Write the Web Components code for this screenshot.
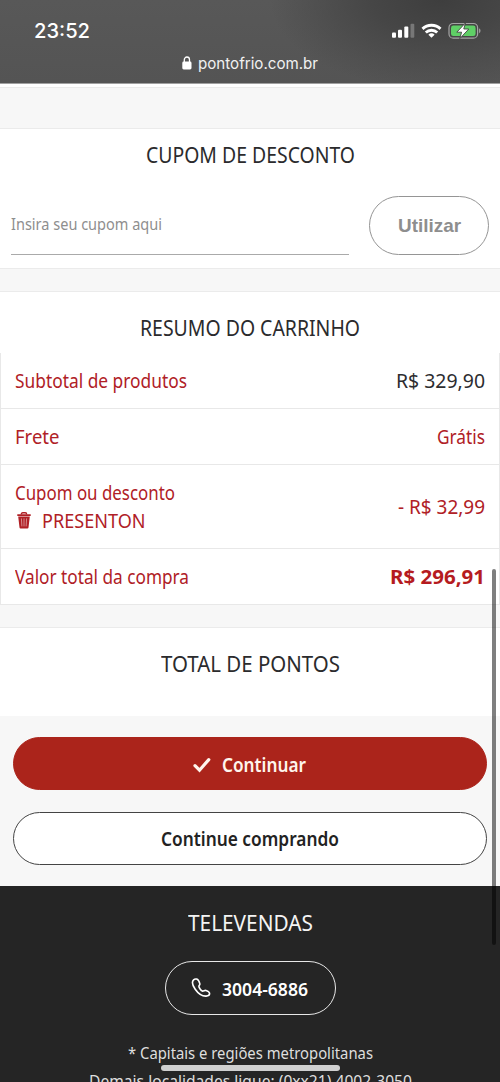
<!DOCTYPE html>
<html lang="pt-BR">
<head>
<meta charset="utf-8">
<title>Carrinho</title>
<style>
html,body{margin:0;height:1082px;overflow:hidden}
body{background:#f7f7f7;font-family:"Noto Sans","Open Sans",sans-serif;color:#2b2b2d}
</style>
</head>
<body>
<checkout-page></checkout-page>
<script>
const define = (name, html, setup) => customElements.define(name, class extends HTMLElement {
  constructor() {
    super();
    const t = document.createElement('template');
    t.innerHTML = html;
    this.attachShadow({ mode: 'open' }).append(t.content.cloneNode(true));
  }
  connectedCallback() { if (setup) setup(this, this.shadowRoot); }
});

/* One line of text, condensed to the width given in "w" and sized by "s". */
define('fit-text', `<style>
  :host{display:block;white-space:nowrap;flex:none;text-align:left}
  span{display:inline-block;transform-origin:0 50%;line-height:inherit;vertical-align:top}
</style><span></span>`, (el, root) => {
  const span = root.querySelector('span');
  const w = +el.getAttribute('w');
  span.textContent = el.getAttribute('text');
  el.style.fontSize = el.getAttribute('s') + 'px';
  el.style.width = w + 'px';
  span.style.transform = `scaleX(${w / span.getBoundingClientRect().width})`;
});

define('status-bar', `<style>
  :host{display:block;box-sizing:border-box;height:84px;color:#fff;border-bottom:1px solid #a0a0a0;
    background:radial-gradient(ellipse 170px 90px at 440px 0,#3e3e3e 0,#464646 40%,#58585800 100%),linear-gradient(#585858,#545454);
    font-family:Inter,Roboto,sans-serif}
  .top{display:flex;justify-content:space-between;align-items:center;height:28px;padding:17px 19px 0 34px;font-weight:550;line-height:28px}
  .icons{display:flex;align-items:center}
  .url{display:flex;justify-content:center;align-items:center;height:28px;padding-top:4px;gap:6px;line-height:28px;color:#f1f1f1}
  svg{display:block}
</style>
<div class="top"><fit-text text="23:52" s="20" w="56"></fit-text>
<div class="icons">
 <svg width="90" height="18" viewBox="391 22 90 18">
  <g fill="#fff"><rect x="392" y="32.4" width="4" height="5.4" rx="1"/><rect x="398" y="29.8" width="4" height="8" rx="1"/><rect x="404.3" y="26.5" width="4" height="11.3" rx="1"/></g>
  <rect x="410.5" y="23.7" width="3.8" height="14.1" rx="1" fill="#777"/>
  <g fill="none" stroke="#fff" stroke-width="2.9"><path d="M422.5 28.9a13 13 0 0 1 18 0"/><path d="M425.8 32.5a8.3 8.3 0 0 1 11.4 0"/></g>
  <path d="M431.5 37.8l-3.1-3.1a4.5 4.5 0 0 1 6.2 0z" fill="#fff"/>
  <rect x="449" y="23.5" width="28.6" height="14.6" rx="4.2" fill="none" stroke="#a4a4a4" stroke-width="1.2"/>
  <rect x="451" y="25.5" width="24.6" height="10.6" rx="2.4" fill="#5fcf66"/>
  <path d="M479 28.3v5q1.6-.6 1.6-2.5t-1.6-2.5z" fill="#999"/>
  <path d="M465.4 23l-8.600 9.200h4.800l-1.800 6.400 9-9.600h-5z" fill="#fff" stroke="#444" stroke-width=".9"/>
 </svg></div></div>
<div class="url"><svg width="10" height="14" viewBox="0 0 10 14"><rect x=".3" y="5.6" width="9.2" height="7.8" rx="1.4" fill="#fff"/><path d="M2.3 6.5V3.8a2.6 2.8 0 0 1 5.2 0v2.7" fill="none" stroke="#fff" stroke-width="1.3"/></svg>
<fit-text text="pontofrio.com.br" s="16" w="120"></fit-text></div>`);

define('page-band', `<style>
  :host{display:block;box-sizing:border-box;background:#f7f7f7;border:solid #ebebeb;border-width:1px 0}
</style>`);

define('section-title', `<style>
  :host{display:flex;justify-content:center;height:30px;line-height:30px}
</style><slot></slot>`);

define('coupon-form', `<style>
  :host{display:flex;box-sizing:border-box;height:59px;padding:0 11px;justify-content:space-between}
  .field{width:338px;height:59px;box-sizing:border-box;border-bottom:1px solid #aaa;line-height:30px;padding-top:13px;color:#8e8e8e}
  button{display:flex;justify-content:center;align-items:center;width:120px;height:59px;padding:0;margin:0;border:1.5px solid #959595;
    border-radius:30px;background:#fff;color:#8e8e8e;font:bold 18px/30px "Liberation Sans",sans-serif}
</style><div class="field"><fit-text text="Insira seu cupom aqui" s="17" w="151"></fit-text></div>
<button><fit-text text="Utilizar" s="19" w="63"></fit-text></button>`);

define('summary-row', `<style>
  :host{display:flex;justify-content:space-between;align-items:center;box-sizing:border-box;height:56px;padding:1px 14px 0 13.5px;
    border:solid #e8e8e8;border-width:0 1px 1px;line-height:28px;color:#b02026}
  :host([tall]){height:84px}
</style><div><slot name="label"></slot></div><div><slot></slot></div>`);

define('coupon-code', `<style>
  :host{display:flex;align-items:center;height:28px;padding-left:2.5px;gap:11px}
  svg{display:block;margin-top:-2px}
</style><svg width="14" height="17" viewBox="0 0 14 17"><path d="M4.3 2.4Q4.3.7 5.8.7h2.4q1.5 0 1.5 1.7" fill="none" stroke="#b02026" stroke-width="1.4"/><path d="M.3 2.2h13.4v1.7H.3zM1.2 4.6h11.6l-1.3 11q-.1 1-1.1 1H3.6q-1 0-1.1-1z" fill="#b02026"/><path d="M4.4 6.4l.5 8M7 6.4v8M9.6 6.4l-.5 8" stroke="#fff" stroke-opacity=".6" stroke-width=".8"/></svg><slot></slot>`);

define('pill-button', `<style>
  :host{display:flex;flex:none;justify-content:center;align-items:center;box-sizing:border-box;height:53px;border-radius:27px;
    line-height:30px;font-weight:600;border:1.5px solid #444;background:#fff;color:#222}
  :host([primary]){border-color:#ab241b;background:#ab241b;color:#fff5ed;gap:11px;padding:2px 1px 0 0}
  :host([dark]){border-color:#e8e8e8;background:transparent;color:#fff;gap:11px;width:171px;height:54px;padding:3px 2px 0 0}
</style><slot></slot>`);

define('line-icon', `<style>:host{display:block;flex:none}svg{display:block}:host([kind=phone]){margin-top:-4px}</style><div></div>`, (el, root) => {
  root.querySelector('div').innerHTML = el.getAttribute('kind') === 'check'
    ? '<svg width="18" height="16" viewBox="0 0 18 16"><path d="M2 8.7l4.5 4.5L15.8 2.6" fill="none" stroke="#fff5ed" stroke-width="3.2" stroke-linecap="round"/></svg>'
    : '<svg width="20" height="20" viewBox="0 0 20 20"><path d="M2.6 1.9C1 3.5 1.1 6.8 4.2 11.2c3.2 4.6 7.6 7 10.9 6.9 2 0 3.5-1.2 3.5-2.5 0-1.2-1.6-2.4-3.6-3.1-1.5-.5-2.3.9-3.6.6-1.3-.4-3.7-3.7-3.5-5 .1-.9 1.3-1 .9-2.500C8.4 4 7.300 1.600 5.600 1.100 4.500.8 3.400 1.100 2.600 1.900z" fill="none" stroke="#fff" stroke-width="1.6"/></svg>';
});

define('tele-footer', `<style>
  :host{display:flex;flex-direction:column;align-items:center;box-sizing:border-box;height:196px;overflow:hidden;background:#252525;color:#f4f4f4;padding-top:21px}
  section-title,fit-text{flex:none}
  pill-button{margin:24px 0 24px}
  .note{height:28px;line-height:28px;color:#dedede}
</style>
<section-title><fit-text text="TELEVENDAS" s="22" w="125"></fit-text></section-title>
<pill-button dark><line-icon kind="phone"></line-icon><fit-text text="3004-6886" s="17" w="86"></fit-text></pill-button>
<fit-text class="note" text="* Capitais e regiões metropolitanas" s="17" w="245"></fit-text>
<fit-text class="note" text="Demais localidades ligue: (0xx21) 4002-3050" s="17" w="323"></fit-text>`);

define('overlay-bar', `<style>
  :host{display:block;position:absolute;border-radius:4px}
  :host([scroll]){left:492px;top:569px;width:4px;height:376px;background:rgba(0,0,0,.5)}
  :host([home]){left:161px;top:1065px;width:179px;height:6px;background:#cfcfcf}
</style>`);

define('checkout-page', `<style>
  :host{display:block;position:relative;width:500px;height:1082px;overflow:hidden;background:#f7f7f7}
  .card{background:#fff;box-sizing:border-box}
  .strip{height:3px}.coupon{height:139px;padding-top:10px}.coupon coupon-form{margin-top:27px}
  .summary{height:313px;padding-top:20px}.summary section-title{margin-bottom:11px}
  .points{height:88px;padding-top:20px}
  .actions{display:flex;flex-direction:column;gap:22px;padding:21px 13px}
</style>
<status-bar></status-bar>
<div class="card strip"></div>
<page-band style="height:42px"></page-band>
<div class="card coupon"><section-title><fit-text text="CUPOM DE DESCONTO" s="22" w="209"></fit-text></section-title><coupon-form></coupon-form></div>
<page-band style="height:24px"></page-band>
<div class="card summary"><section-title><fit-text text="RESUMO DO CARRINHO" s="22" w="220"></fit-text></section-title>
<summary-row><fit-text slot="label" text="Subtotal de produtos" s="19.5" w="172"></fit-text><fit-text text="R$ 329,90" s="19.5" w="89" style="color:#2d2d30"></fit-text></summary-row>
<summary-row><fit-text slot="label" text="Frete" s="19.5" w="44.5"></fit-text><fit-text text="Grátis" s="19.5" w="48"></fit-text></summary-row>
<summary-row tall><div slot="label"><fit-text text="Cupom ou desconto" s="19.5" w="160"></fit-text><coupon-code><fit-text text="PRESENTON" s="19.5" w="103.5"></fit-text></coupon-code></div><fit-text text="- R$ 32,99" s="19.5" w="87"></fit-text></summary-row>
<summary-row><fit-text slot="label" text="Valor total da compra" s="19.5" w="174"></fit-text><fit-text text="R$ 296,91" s="19.5" w="95" style="font-weight:700;color:#b51b20"></fit-text></summary-row></div>
<page-band style="height:23px;border-top:0"></page-band>
<div class="card points"><section-title><fit-text text="TOTAL DE PONTOS" s="22" w="179"></fit-text></section-title></div>
<div class="actions">
<pill-button primary><line-icon kind="check"></line-icon><fit-text text="Continuar" s="19" w="84"></fit-text></pill-button>
<pill-button><fit-text text="Continue comprando" s="19" w="178"></fit-text></pill-button></div>
<tele-footer></tele-footer>
<overlay-bar scroll></overlay-bar><overlay-bar home></overlay-bar>`);
</script>
</body>
</html>
